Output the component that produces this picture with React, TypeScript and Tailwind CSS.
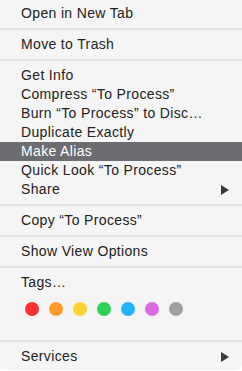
import React from 'react';

type Item = { label: string; submenu?: boolean; active?: boolean };

const groups: Item[][] = [
  [{ label: 'Open in New Tab' }],
  [{ label: 'Move to Trash' }],
  [
    { label: 'Get Info' },
    { label: 'Compress \u201CTo Process\u201D' },
    { label: 'Burn \u201CTo Process\u201D to Disc\u2026' },
    { label: 'Duplicate Exactly' },
    { label: 'Make Alias', active: true },
    { label: 'Quick Look \u201CTo Process\u201D' },
    { label: 'Share', submenu: true },
  ],
  [{ label: 'Copy \u201CTo Process\u201D' }],
  [{ label: 'Show View Options' }],
];

const tagColors = ['#fd3131', '#fd9a2a', '#fcd22f', '#2dd154', '#22b2fb', '#dc6ae0', '#a0a0a3'];

function Arrow() {
  return (
    <svg width="8" height="10" viewBox="0 0 8 10" className="shrink-0">
      <polygon points="0,0 8,5 0,10" fill="#3a3a3a" />
    </svg>
  );
}

function MenuItem({ item }: { item: Item }) {
  return (
    <div
      className={`flex h-[19px] items-center justify-between pl-[21px] pr-[13px] ${
        item.active ? 'bg-[#6d6c70] text-white' : 'text-[#222222]'
      }`}
    >
      <span>{item.label}</span>
      {item.submenu && <Arrow />}
    </div>
  );
}

function Separator() {
  return (
    <div className="flex h-[12px] items-center">
      <div className="h-[2px] w-full bg-[#e3e3e3]" />
    </div>
  );
}

export default function App() {
  return (
    <div className="h-[371px] w-[242px] bg-white">
      <div
        className="flex w-full flex-col rounded-b-[6px] bg-[#f5f5f5] py-[4px] text-[14px] leading-[19px] tracking-[0.35px]"
        style={{ fontFamily: '"Liberation Sans", Arial, sans-serif' }}
      >
        {groups.map((group, i) => (
          <React.Fragment key={i}>
            {group.map((item) => (
              <MenuItem key={item.label} item={item} />
            ))}
            <Separator />
          </React.Fragment>
        ))}

        {/* Tags */}
        <MenuItem item={{ label: 'Tags\u2026' }} />
        <div className="flex h-[43px] items-start gap-[10px] pl-[25px] pt-[10px]">
          {tagColors.map((c) => (
            <span key={c} className="h-[14px] w-[14px] rounded-full" style={{ backgroundColor: c }} />
          ))}
        </div>
        <Separator />

        <MenuItem item={{ label: 'Services', submenu: true }} />
      </div>
    </div>
  );
}
